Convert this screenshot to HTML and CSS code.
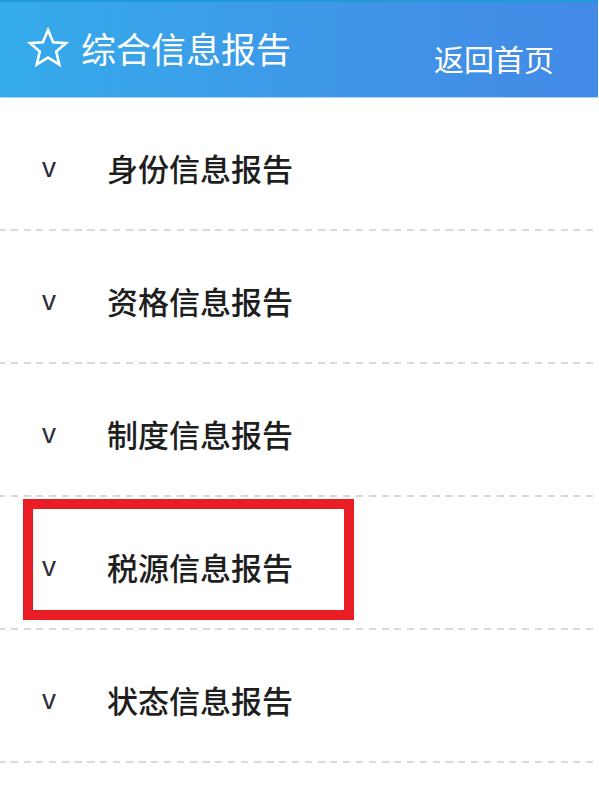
FILE: index.html
```html
<!DOCTYPE html>
<html lang="zh-CN">
<head>
    <meta charset="UTF-8">
    <meta name="viewport" content="width=device-width, initial-scale=1.0">
    <title>综合信息报告</title>
    <link rel="stylesheet" href="styles.css">
</head>
<body>
    <div class="header">
        <div class="title">
            <svg class="star" width="42" height="41" viewBox="0 0 42 41">
                <path d="M21 3 L26.2 15.2 L39 16.1 L29.2 24.6 L32.3 37.5 L21 30.6 L9.7 37.5 L12.8 24.6 L3 16.1 L15.8 15.2 Z" fill="none" stroke="#fff" stroke-width="2.6" stroke-linejoin="miter"/>
            </svg>
            <h1>综合信息报告</h1>
        </div>
        <a href="index.html" class="back-link">返回首页</a>
    </div>

    <div class="list">
        <div class="row">
            <span class="chevron">v</span>
            <span class="label">身份信息报告</span>
        </div>
        <div class="row">
            <span class="chevron">v</span>
            <span class="label">资格信息报告</span>
        </div>
        <div class="row">
            <span class="chevron">v</span>
            <span class="label">制度信息报告</span>
        </div>
        <div class="row highlighted">
            <span class="chevron">v</span>
            <span class="label">税源信息报告</span>
            <div class="mark"></div>
        </div>
        <div class="row">
            <span class="chevron">v</span>
            <span class="label">状态信息报告</span>
        </div>
    </div>
</body>
</html>
```

FILE: styles.css
```css
body {
    margin: 0;
    font-family: "Noto Sans CJK SC", "Liberation Sans", sans-serif;
    background-color: white;
}
.header {
    width: 598px;
    height: 98px;
    box-sizing: border-box;
    border-top: 2px solid #1e9ad6;
    border-bottom: 1px solid #a9d3f3;
    background: linear-gradient(to right, #34abea, #3f97e8 55%, #4389e6);
    display: flex;
    align-items: center;
    justify-content: space-between;
}
.title {
    display: flex;
    align-items: center;
    padding-left: 27px;
    margin-top: -5px;
}
.star {
    display: block;
    margin-right: 12px;
}
h1 {
    margin: 0;
    font-size: 35px;
    font-weight: normal;
    color: white;
    line-height: 1;
}
.back-link {
    color: white;
    text-decoration: none;
    font-size: 30px;
    line-height: 1;
    padding-right: 44px;
    margin-top: 16px;
}
.row {
    position: relative;
    height: 131px;
    display: flex;
    align-items: center;
    border-bottom: 2px solid transparent;
    border-image: repeating-linear-gradient(to right, #d9d9dd 0 7px, transparent 7px 12.7px) 2;
}
.chevron {
    width: 65px;
    padding-left: 42px;
    margin-top: 8px;
    font-family: "Liberation Sans", sans-serif;
    font-size: 28px;
    color: #2d2d3a;
    line-height: 1;
}
.label {
    font-size: 31px;
    font-weight: 500;
    color: #1e1e1e;
    line-height: 1;
    margin-top: 8px;
}
.mark {
    position: absolute;
    left: 23px;
    top: 2px;
    width: 331px;
    height: 121px;
    box-sizing: border-box;
    border: 10px solid #e81d25;
}
```
